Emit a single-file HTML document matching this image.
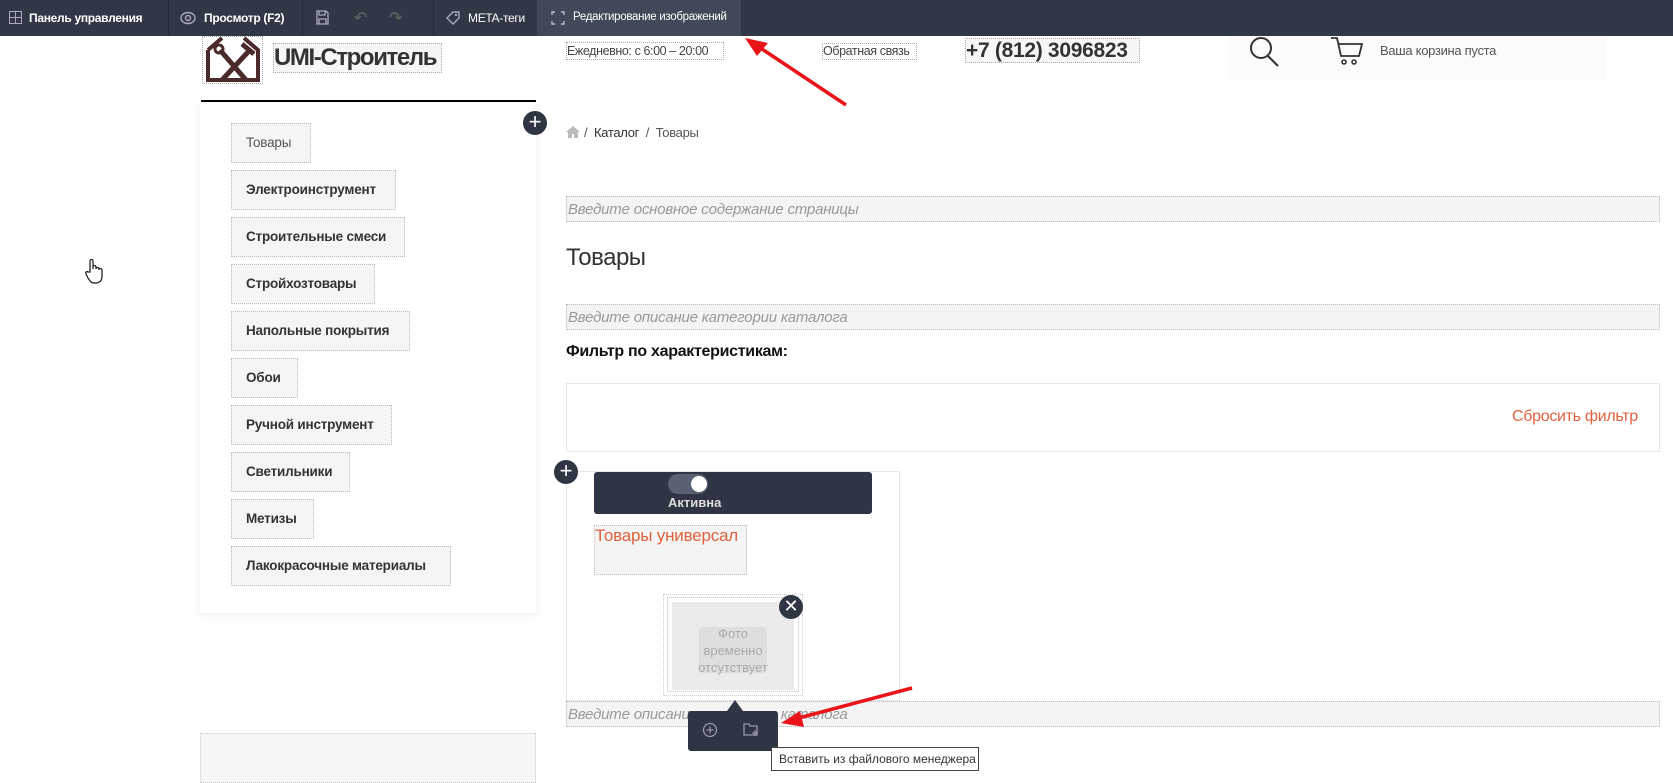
<!DOCTYPE html>
<html><head><meta charset="utf-8"><style>
*{box-sizing:border-box;margin:0;padding:0;white-space:nowrap}
body{width:1673px;height:777px;overflow:hidden;background:#fff;font-family:"Liberation Sans","DejaVu Sans",sans-serif;position:relative;color:#333}
.abs{position:absolute}
.tb{left:0;top:0;width:1673px;height:36px;background:#313745}
.tb .t{position:absolute;top:11px;font-size:12px;font-weight:bold;color:#fff;letter-spacing:-0.3px}
.tb .sep{position:absolute;top:0;width:1px;height:36px;background:#262b36}
.dot{border:1px dotted #aaa}
.nav{left:200px;top:103px;width:336px;height:510px;background:#fff;box-shadow:0 2px 8px rgba(0,0,0,.07)}
.it{position:absolute;left:31px;height:40px;background:#f5f5f5;border:1px dotted #bbb;font-size:13.5px;font-weight:bold;color:#333;padding:11px 0 0 14px;letter-spacing:-0.2px}
.fld{left:566px;width:1094px;height:26px;background:#f4f4f4;border:1px dotted #bbb;font-style:italic;color:#999;font-size:15px;padding:4px 0 0 1px;letter-spacing:-0.2px}
.plus{width:24px;height:24px;border-radius:50%;background:#2f3543;color:#fff;font-size:22px;line-height:22px;text-align:center}
</style></head><body>
<div class="abs tb">
 <svg class="abs" style="left:9px;top:11px" width="13" height="13" viewBox="0 0 13 13"><rect x="0.5" y="0.5" width="12" height="12" fill="none" stroke="#aab" /><path d="M6.5 0v13M0 6.5h13" stroke="#aab"/></svg>
 <div class="t" style="left:29px">Панель управления</div>
 <div class="sep" style="left:168px"></div>
 <svg class="abs" style="left:180px;top:11px" width="16" height="14" viewBox="0 0 16 14"><ellipse cx="8" cy="7" rx="7" ry="5.5" fill="none" stroke="#aab" stroke-width="1.4"/><circle cx="8" cy="7" r="2.5" fill="none" stroke="#aab" stroke-width="1.4"/></svg>
 <div class="t" style="left:204px">Просмотр (F2)</div>
 <div class="sep" style="left:302px"></div>
 <svg class="abs" style="left:316px;top:10px" width="13" height="15" viewBox="0 0 13 15"><path d="M1 1h9l2 2v11H1z M3 1v4h6V1 M3 14V9h7v5" fill="none" stroke="#aab" stroke-width="1.3"/></svg>
 <div class="t" style="left:354px;top:8px;color:#666;font-size:16px;font-weight:normal">↶</div>
 <div class="t" style="left:389px;top:8px;color:#666;font-size:16px;font-weight:normal">↷</div>
 <div class="sep" style="left:433px"></div>
 <svg class="abs" style="left:446px;top:11px" width="14" height="14" viewBox="0 0 14 14"><path d="M1 7L7 1h6v6l-6 6z" fill="none" stroke="#aab" stroke-width="1.4"/><circle cx="10" cy="4" r="1.2" fill="#aab"/></svg>
 <div class="t" style="left:468px;font-weight:normal">META-теги</div>
 <div class="abs" style="left:537px;top:0;width:204px;height:36px;background:#414857"></div>
 <svg class="abs" style="left:551px;top:11px" width="14" height="14" viewBox="0 0 14 14"><path d="M1 4V1h3M10 1h3v3M13 10v3h-3M4 13H1v-3" fill="none" stroke="#bbc" stroke-width="1.4"/></svg>
 <div class="t" style="left:573px;font-weight:normal;font-size:11.5px">Редактирование изображений</div>
</div>

<div class="abs dot" style="left:202px;top:36px;width:61px;height:48px"></div>
<svg class="abs" style="left:204px;top:36px" width="58" height="48" viewBox="0 0 58 48"><path d="M4 14L18 2M40 2l14 12v30H4V14" fill="none" stroke="#4a2a2a" stroke-width="4"/><path d="M16 14l26 30M44 16L18 44" stroke="#4a2a2a" stroke-width="5"/><path d="M38 8l12 10" stroke="#4a2a2a" stroke-width="5"/><circle cx="15" cy="13" r="4" fill="none" stroke="#4a2a2a" stroke-width="3"/></svg>
<div class="abs dot" style="left:273px;top:43px;width:169px;height:30px;background:#f6f6f6;font-size:24px;font-weight:bold;color:#333;letter-spacing:-1.4px;line-height:28px;overflow:hidden">UMI-Строитель</div>
<div class="abs dot" style="left:566px;top:42px;width:158px;height:18px;font-size:12.5px;color:#444;line-height:16px;letter-spacing:-0.4px;overflow:hidden">Ежедневно: с 6:00 – 20:00</div>
<div class="abs" style="left:1228px;top:36px;width:379px;height:44px;background:#fbfbfb"></div>
<div class="abs dot" style="left:822px;top:43px;width:95px;height:17px;font-size:12.5px;color:#444;line-height:15px;letter-spacing:-0.4px;overflow:hidden">Обратная связь</div>
<div class="abs dot" style="left:965px;top:38px;width:175px;height:25px;font-size:21px;font-weight:bold;color:#333;line-height:23px;background:#f6f6f6;letter-spacing:-0.3px">+7 (812) 3096823</div>
<svg class="abs" style="left:1249px;top:36px" width="32" height="32" viewBox="0 0 32 32"><circle cx="12" cy="12" r="10" fill="none" stroke="#333" stroke-width="2"/><path d="M19 20l10 10" stroke="#333" stroke-width="2.2"/></svg>
<svg class="abs" style="left:1330px;top:36px" width="34" height="30" viewBox="0 0 34 30"><path d="M1 2h6l4 18h18l3-12H9" fill="none" stroke="#333" stroke-width="1.8"/><circle cx="14" cy="26" r="2" fill="none" stroke="#333" stroke-width="1.6"/><circle cx="24" cy="26" r="2" fill="none" stroke="#333" stroke-width="1.6"/></svg>
<div class="abs" style="left:1380px;top:43px;font-size:13px;color:#555;letter-spacing:-0.3px">Ваша корзина пуста</div>

<div class="abs" style="left:201px;top:100px;width:335px;height:2px;background:#000"></div>

<div class="abs nav">
 <div class="it" style="top:20px;width:80px;font-weight:normal;color:#555">Товары</div>
 <div class="it" style="top:67px;width:165px">Электроинструмент</div>
 <div class="it" style="top:114px;width:174px">Строительные смеси</div>
 <div class="it" style="top:161px;width:144px">Стройхозтовары</div>
 <div class="it" style="top:208px;width:179px">Напольные покрытия</div>
 <div class="it" style="top:255px;width:67px">Обои</div>
 <div class="it" style="top:302px;width:161px">Ручной инструмент</div>
 <div class="it" style="top:349px;width:119px">Светильники</div>
 <div class="it" style="top:396px;width:83px">Метизы</div>
 <div class="it" style="top:443px;width:220px">Лакокрасочные материалы</div>
</div>
<div class="abs plus" style="left:523px;top:111px">+</div>
<div class="abs dot" style="left:200px;top:733px;width:336px;height:50px;background:#f6f6f6;border-color:#ccc"></div>
<svg class="abs" style="left:84px;top:258px" width="20" height="26" viewBox="0 0 20 26"><path d="M6 14V3a1.5 1.5 0 0 1 3 0v8V9a1.5 1.5 0 0 1 3 0v2a1.5 1.5 0 0 1 3 0v1a1.5 1.5 0 0 1 3 0v6c0 4-2 7-6 7h-2c-3 0-4-2-6-5l-2-4c-1-2 1-3 2-2z" fill="#fff" stroke="#222" stroke-width="1.3"/></svg>

<svg class="abs" style="left:566px;top:126px" width="14" height="12" viewBox="0 0 14 12"><path d="M7 0L0 6h2v6h4V8h2v4h4V6h2z" fill="#bbb"/></svg>
<div class="abs" style="left:584px;top:125px;font-size:13px;color:#555;letter-spacing:-0.3px">/&nbsp;&nbsp;<span style="color:#333">Каталог</span>&nbsp;&nbsp;/&nbsp;&nbsp;Товары</div>

<div class="abs fld" style="top:196px">Введите основное содержание страницы</div>
<div class="abs" style="left:566px;top:244px;font-size:24px;color:#333;letter-spacing:-0.5px">Товары</div>
<div class="abs fld" style="top:304px">Введите описание категории каталога</div>
<div class="abs" style="left:566px;top:343px;font-size:16px;font-weight:bold;color:#111;letter-spacing:-0.3px">Фильтр по характеристикам:</div>
<div class="abs" style="left:566px;top:383px;width:1094px;height:69px;border:1px solid #e6e6e6"></div>
<div class="abs" style="left:1512px;top:408px;font-size:16px;color:#e0613e;letter-spacing:-0.3px">Сбросить фильтр</div>

<div class="abs" style="left:566px;top:471px;width:334px;height:230px;border:1px solid #e6e6e6"></div>
<div class="abs plus" style="left:554px;top:460px">+</div>
<div class="abs" style="left:594px;top:472px;width:278px;height:42px;background:#2f3543;border-radius:3px"></div>
<div class="abs" style="left:668px;top:474px;width:40px;height:20px;border-radius:10px;background:#5a6272"></div>
<div class="abs" style="left:691px;top:476px;width:16px;height:16px;border-radius:50%;background:#fff"></div>
<div class="abs" style="left:668px;top:495px;font-size:13px;font-weight:bold;color:#ddd">Активна</div>
<div class="abs dot" style="left:594px;top:525px;width:153px;height:50px;background:#f4f4f4;border-color:#bbb;font-size:17px;color:#e0613e;line-height:20px;overflow:hidden;letter-spacing:-0.2px">Товары универсал</div>
<div class="abs dot" style="left:663px;top:594px;width:140px;height:102px;border-color:#ccc"></div>
<div class="abs" style="left:667px;top:597px;width:132px;height:95px;border:1px solid #ddd;background:#fff"></div>
<div class="abs" style="left:672px;top:602px;width:122px;height:88px;background:#ebebeb"></div>
<div class="abs" style="left:699px;top:627px;width:68px;height:46px;background:#dedede;border-radius:4px"></div>
<div class="abs" style="left:672px;top:625px;width:122px;text-align:center;font-size:13px;line-height:17px;color:#aaa">Фото<br>временно<br>отсутствует</div>
<div class="abs plus" style="left:779px;top:595px;font-size:18px">✕</div>
<div class="abs fld" style="top:701px">Введите описание категории каталога</div>

<div class="abs" style="left:727px;top:700px;width:0;height:0;border-left:8px solid transparent;border-right:8px solid transparent;border-bottom:11px solid #2f3543"></div>
<div class="abs" style="left:688px;top:711px;width:90px;height:40px;background:#2f3543;border-radius:3px"></div>
<svg class="abs" style="left:702px;top:722px" width="16" height="16" viewBox="0 0 16 16"><circle cx="8" cy="8" r="6.5" fill="none" stroke="#99a" stroke-width="1.3"/><path d="M8 4.5v7M4.5 8h7" stroke="#99a" stroke-width="1.3"/></svg>
<svg class="abs" style="left:743px;top:722px" width="16" height="15" viewBox="0 0 16 15"><path d="M1 2h5l1 2h7v9H1z" fill="none" stroke="#99a" stroke-width="1.3"/><path d="M12 8v6M9 11h6" stroke="#99a" stroke-width="1.3"/></svg>
<div class="abs" style="left:771px;top:747px;width:208px;height:24px;border:1px solid #444;background:#fff;font-size:12px;color:#333;padding:4px 0 0 7px">Вставить из файлового менеджера</div>

<svg class="abs" style="left:0;top:0" width="1673" height="777">
 <path d="M846 105L756 45" stroke="#e8141a" stroke-width="3.5"/>
 <path d="M745 38L768 43L757 56z" fill="#e8141a"/>
 <path d="M912 688L795 719" stroke="#e8141a" stroke-width="3.5"/>
 <path d="M781 723L800 711L804 727z" fill="#e8141a"/>
</svg>
</body></html>
